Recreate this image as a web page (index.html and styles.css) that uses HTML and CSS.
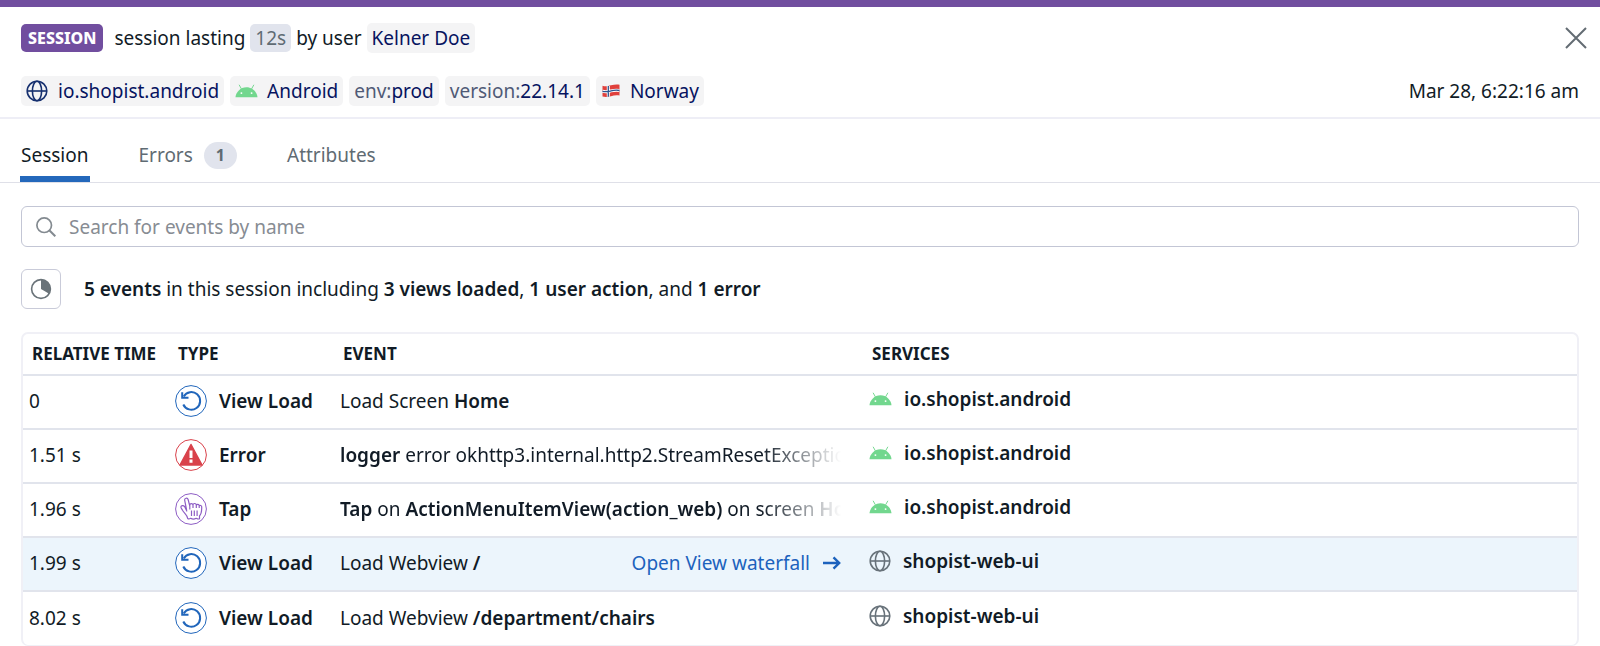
FILE: index.html
```html
<!DOCTYPE html>
<html lang="en">
<head>
<meta charset="utf-8">
<title>Session details</title>
<meta name="viewport" content="width=device-width, initial-scale=1">
<link rel="stylesheet" href="styles.css">
</head>
<body>
<svg class="sprite" aria-hidden="true">
  <symbol id="globe" viewBox="0 0 22 22">
    <g fill="none" stroke="currentColor" stroke-width="1.6">
      <circle cx="11" cy="11" r="9.8"/>
      <ellipse cx="11" cy="11" rx="4.6" ry="9.8"/>
      <path d="M1.200 11h19.600"/>
    </g>
  </symbol>
  <symbol id="android" viewBox="0 0 24 14">
    <path d="M.5 13.500C1 8.500 5.500 3.200 12 3.200S23 8.500 23.500 13.500z" fill="currentColor"/>
    <path d="M4.300.5l2.400 4.300M19.700.5l-2.400 4.300" stroke="currentColor" stroke-width="1"/>
    <circle cx="6.700" cy="9.200" r="1" fill="#fff"/><circle cx="17.300" cy="9.200" r="1" fill="#fff"/>
  </symbol>
  <symbol id="reload" viewBox="0 0 32 32">
    <circle cx="16" cy="16" r="15.400" fill="#fff" stroke="currentColor" stroke-width="1"/>
    <path d="M8.300 19.500a8.800 8.800 0 1 0 .4-8" fill="none" stroke="currentColor" stroke-width="2"/>
    <path d="M7.200 7.200v5.600h6.300" fill="none" stroke="currentColor" stroke-width="2"/>
  </symbol>
  <symbol id="arrow" viewBox="0 0 18 14">
    <path d="M0 7h16M10.500 1.300L16.200 7l-5.700 5.700" fill="none" stroke="currentColor" stroke-width="2.400"/>
  </symbol>
</svg>

<header class="header">
  <div class="header-row">
    <h1 class="title">
      <span class="badge">SESSION</span>
      <span>session lasting</span>
      <span class="duration">12s</span>
      <span>by user</span>
      <a class="chip" href="#">Kelner Doe</a>
    </h1>
    <button class="close" type="button" aria-label="Close">
      <svg width="22" height="22" viewBox="0 0 22 22"><path d="M1 1l20 20M21 1L1 21" stroke="currentColor" stroke-width="2"/></svg>
    </button>
  </div>
  <div class="header-row">
    <div class="chips">
      <a class="chip" href="#"><svg class="globe"><use href="#globe"/></svg>io.shopist.android</a>
      <a class="chip" href="#"><svg class="android"><use href="#android"/></svg>Android</a>
      <a class="chip" href="#"><span class="key">env:</span>prod</a>
      <a class="chip" href="#"><span class="key">version:</span>22.14.1</a>
      <a class="chip chip-flag" href="#">
        <svg width="18" height="14" viewBox="0 0 18 14">
          <path d="M.5 1.800C4 3 6 2 9 1.300s6-1 8.500-.5v10.700c-3-.6-6 0-8.500.7s-5.500 1.200-8.500.3z" fill="#e0403c"/>
          <path d="M6.300 2v10.700M.5 7.300c3.500 1 6 .2 8.500-.4s5.500-1 8.500-.4" fill="none" stroke="#fff" stroke-width="3"/>
          <path d="M6.300 2v10.700M.5 7.300c3.500 1 6 .2 8.500-.4s5.500-1 8.500-.4" fill="none" stroke="#2d5590" stroke-width="1.300"/>
        </svg>Norway</a>
    </div>
    <time class="timestamp">Mar 28, 6:22:16 am</time>
  </div>
</header>

<nav class="tabs">
  <a class="tab tab-active" href="#">Session</a>
  <a class="tab" href="#">Errors <span class="count">1</span></a>
  <a class="tab" href="#">Attributes</a>
</nav>

<main class="content">
  <label class="search">
    <svg width="20" height="20" viewBox="0 0 20 20"><circle cx="8.200" cy="8.200" r="7.300" fill="none" stroke="currentColor" stroke-width="1.700"/><path d="M13.300 13.300l6 6" stroke="currentColor" stroke-width="2"/></svg>
    <input type="text" placeholder="Search for events by name" aria-label="Search for events by name">
  </label>

  <div class="summary">
    <button class="chart-button" type="button" aria-label="Show chart">
      <svg width="22" height="22" viewBox="0 0 22 22"><circle cx="11" cy="11" r="9.400" fill="none" stroke="currentColor" stroke-width="1.600"/><path d="M11 11V1.600a9.400 9.400 0 0 1 8.100 14.100z" fill="currentColor"/></svg>
    </button>
    <p><b>5 events</b> in this session including <b>3 views loaded</b>, <b>1 user action</b>, and <b>1 error</b></p>
  </div>

  <div class="table-box">
    <table class="events">
      <colgroup><col class="col-time"><col class="col-type"><col class="col-event"><col></colgroup>
      <thead>
        <tr><th scope="col">RELATIVE TIME</th><th scope="col">TYPE</th><th scope="col">EVENT</th><th scope="col">SERVICES</th></tr>
      </thead>
      <tbody>
        <tr>
          <td>0</td>
          <td><div class="type"><svg class="type-icon view"><use href="#reload"/></svg>View Load</div></td>
          <td><div class="event">Load Screen <b>Home</b></div></td>
          <td><div class="service"><svg class="android"><use href="#android"/></svg>io.shopist.android</div></td>
        </tr>
        <tr>
          <td>1.51 s</td>
          <td><div class="type"><svg class="type-icon error" viewBox="0 0 32 32"><circle cx="16" cy="16" r="15.400" fill="#fff" stroke="currentColor"/><path d="M16 5.500L27 26H5z" fill="currentColor" stroke="currentColor" stroke-width="1.500" stroke-linejoin="round"/><path d="M16 11.500v7.500M16 20.500v3.200" stroke="#fff" stroke-width="3"/></svg>Error</div></td>
          <td><div class="event event-fade"><b>logger</b> error okhttp3.internal.http2.StreamResetException</div></td>
          <td><div class="service"><svg class="android"><use href="#android"/></svg>io.shopist.android</div></td>
        </tr>
        <tr>
          <td>1.96 s</td>
          <td><div class="type"><svg class="type-icon tap" viewBox="0 0 32 32"><circle cx="16" cy="16" r="15.400" fill="#fff" stroke="currentColor"/><path d="M11.800 18L9.700 7.300C9.300 5 12.500 4.300 13.100 6.500l1.700 6.500v-1c0-1.900 3-1.900 3.200 0v-.3c.4-1.700 3-1.500 3.300.2v.3c.6-1.400 2.700-1.100 2.900.3v.5c.8-1 2.500-.6 2.500.8 0 3.500.3 6.500-2.200 9.200v2.700c-1.300.8-2.400 0-3.300-.4-1.700 1-4 1-5.500 0-.9.600-2 1-3 .2-.3-3.600-3.600-5.400-5.200-8.200-.9-1.700-1.600-2.200-1.600-3.400.3-2 3-1.300 3.700-.3zM14.800 13v3.500M18 12v3M21.300 12v3M24.200 13v2M16.500 17.500V23M19.300 17.500V23M22.100 17.500V23" fill="none" stroke="currentColor" stroke-width="1.200" stroke-linejoin="round"/></svg>Tap</div></td>
          <td><div class="event event-fade"><b>Tap</b> on <b>ActionMenuItemView(action_web)</b> on screen <b>Home</b></div></td>
          <td><div class="service"><svg class="android"><use href="#android"/></svg>io.shopist.android</div></td>
        </tr>
        <tr class="selected">
          <td>1.99 s</td>
          <td><div class="type"><svg class="type-icon view"><use href="#reload"/></svg>View Load</div></td>
          <td><div class="event event-link"><span>Load Webview <b>/</b></span><a href="#">Open View waterfall <svg class="arrow"><use href="#arrow"/></svg></a></div></td>
          <td><div class="service"><svg class="globe"><use href="#globe"/></svg>shopist-web-ui</div></td>
        </tr>
        <tr>
          <td>8.02 s</td>
          <td><div class="type"><svg class="type-icon view"><use href="#reload"/></svg>View Load</div></td>
          <td><div class="event">Load Webview <b>/department/chairs</b></div></td>
          <td><div class="service"><svg class="globe"><use href="#globe"/></svg>shopist-web-ui</div></td>
        </tr>
      </tbody>
    </table>
  </div>
</main>
</body>
</html>
```
FILE: styles.css
```css
* { box-sizing: border-box; }
body {
  margin: 0;
  border-top: 7px solid #714e9f;
  background: #fff;
  color: #111b26;
  font: 19px/28px "Noto Sans", sans-serif;
}
a { color: inherit; text-decoration: none; }
b { font-weight: 600; }
button { padding: 0; background: none; border: 0; cursor: pointer; }
svg { flex: none; display: block; }
.sprite { position: absolute; width: 0; height: 0; }

.header { padding: 16px 21px 11px; border-bottom: 2px solid #eeeef6; }
.header-row { display: flex; align-items: center; justify-content: space-between; }
.header-row + .header-row { margin-top: 23px; }
.title { display: flex; align-items: center; gap: 5px; margin: 0; font-size: 19px; font-weight: 400; }
.badge {
  margin-right: 6px;
  padding: 0 7px;
  border-radius: 5px;
  background: #714e9f;
  color: #fff;
  font-size: 16px;
  font-weight: 800;
}
.duration { padding: 0 5px; border-radius: 5px; background: #e1e4ed; color: #5f6b73; }
.close { margin-right: -9px; padding: 0 1px; color: #636c73; }
.chips { display: flex; gap: 6px; }
.chip {
  display: flex;
  align-items: center;
  height: 30px;
  padding: 0 5px;
  border-radius: 5px;
  background: #f4f4f5;
  color: #06135f;
}
.key { color: #505a76; }
.globe { width: 22px; height: 22px; }
.android { width: 23px; height: 14px; color: #72d78e; }
.chip .globe { margin-right: 10px; color: #16306f; }
.chip .android { margin-right: 9px; }
.chip-flag svg { margin: 0 10px 0 1px; }

.tabs { display: flex; gap: 48px; padding: 11px 20px 0; border-bottom: 1px solid #dfe0e8; }
.tab {
  display: flex;
  align-items: center;
  gap: 11px;
  height: 52px;
  padding: 4px 1px 0;
  border-bottom: 6px solid transparent;
  color: #5f6b73;
}
.tab-active { border-color: #2468bb; color: #111b26; }
.count {
  padding: 0 12px;
  border-radius: 14px;
  background: #e1e4ed;
  font-size: 16px;
  line-height: 27px;
  font-weight: 700;
}

.content { padding: 23px 21px 0; }
.search {
  display: flex;
  align-items: center;
  gap: 13px;
  height: 41px;
  padding: 0 14px;
  border: 1px solid #c3c6d5;
  border-radius: 6px;
  color: #838a90;
}
.search input { flex: 1; padding: 0; border: 0; outline: 0; background: none; font: inherit; color: #111b26; }
.search input::placeholder { color: #878c93; opacity: 1; }

.summary { display: flex; align-items: center; gap: 23px; margin: 22px 0 23px; }
.summary p { margin: 0; }
.chart-button {
  display: flex;
  align-items: center;
  justify-content: center;
  width: 40px;
  height: 40px;
  border: 1px solid #c9cbd9;
  border-radius: 6px;
  color: #6a7379;
}

.table-box { border: 2px solid #f0f0f6; border-bottom-width: 1px; border-radius: 7px; overflow: hidden; }
.events { width: 100%; table-layout: fixed; border-spacing: 0; }
.col-time { width: 146px; }
.col-type { width: 165px; }
.col-event { width: 529px; }
.events th { height: 42px; padding: 0 0 0 9px; border-bottom: 2px solid #e1e4ec; font-size: 17px; line-height: 24px; text-align: left; white-space: nowrap; }
.events td { height: 54px; padding: 0 0 2px 6px; border-bottom: 2px solid #e1e4ec; white-space: nowrap; }
.events tr:last-child td { height: 53px; border-bottom: 0; }
.events thead tr:last-child th { border-bottom: 2px solid #e1e4ec; }
.selected { background: #ecf5fc; }
.type, .service { display: flex; align-items: center; gap: 12px; font-weight: 600; }
.type-icon { width: 32px; height: 32px; }
.view { color: #2166bb; }
.error { color: #d9424b; }
.tap { color: #8d5dc4; }
.event { margin-right: 22px; overflow: hidden; }
.event-fade { -webkit-mask-image: linear-gradient(90deg, #000 84%, transparent); mask-image: linear-gradient(90deg, #000 84%, transparent); }
.event-link { display: flex; justify-content: space-between; }
.event-link a { display: flex; align-items: center; gap: 13px; color: #1c62bd; }
.arrow { width: 18px; height: 14px; }
.service { padding-bottom: 4px; }
.service .globe { color: #68727a; }
```
